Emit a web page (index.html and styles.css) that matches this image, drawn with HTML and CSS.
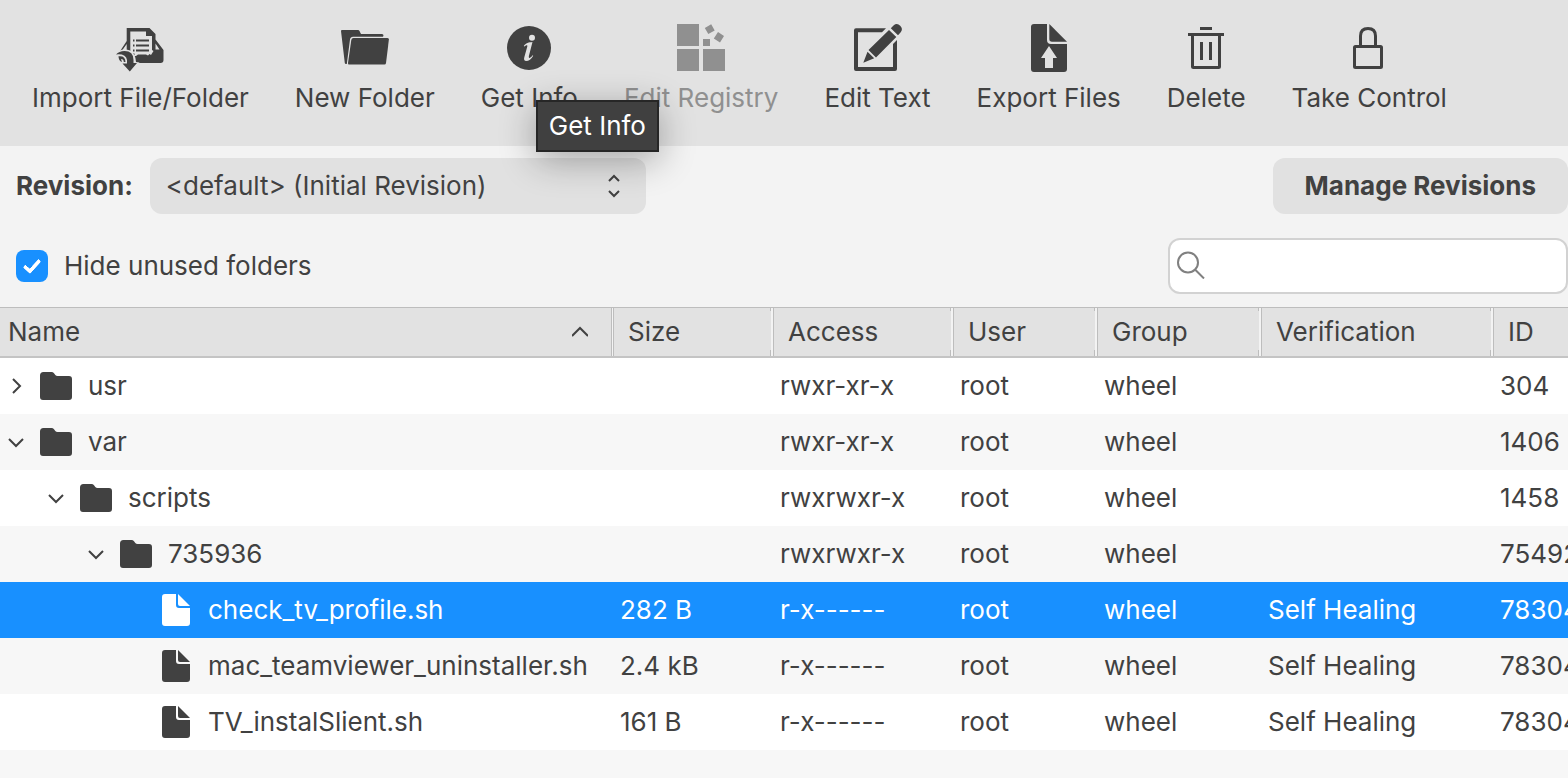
FILE: index.html
```html
<!DOCTYPE html>
<html lang="en">
<head>
<meta charset="utf-8">
<meta name="viewport" content="width=device-width, initial-scale=1">
<title>Package Files</title>
<link rel="stylesheet" href="styles.css">
</head>
<body>
<svg class="sprite" aria-hidden="true">
  <symbol id="folder" viewBox="0 0 32 32"><path d="M3.500 2H11.500Q13 2 14 3.200L15.300 4.900Q16.200 6 17.500 6H29Q32 6 32 9V27Q32 30 29 30H3Q0 30 0 27V5.500Q0 2 3.500 2Z"/></symbol>
  <symbol id="file" viewBox="0 0 32 32"><path d="M5 0H16V11Q16 14 19 14H30V29Q30 32 27 32H5Q2 32 2 29V3Q2 0 5 0Z"/><path d="M18 0L30 12H20Q18 12 18 10Z"/></symbol>
  <symbol id="down" viewBox="0 0 16 16"><path class="line" d="M1 5L8 12L15 5"/></symbol>
  <symbol id="right" viewBox="0 0 16 16"><path class="line" d="M5 1L12 8L5 15"/></symbol>
  <symbol id="up" viewBox="0 0 16 16"><path class="line" d="M0 12L8 4L16 12"/></symbol>
</svg>

<header class="toolbar">
  <button class="tool" type="button">
    <svg class="tool-icon" viewBox="0 0 48 48">
      <path d="M10.700 4H33.500L39.500 10V15.500L47.500 26V36Q47.500 39 44.500 39H20L16 31H1.500L10.700 17Z"/>
      <path class="bg" d="M14.300 7.500H30V12H36V26L37.500 27L35 31L33.500 30L32 31.500L30 30.500H22L20 32H15L14.300 27ZM10.700 20V28H5ZM39.500 19.500L43.500 25.500H39.500Z"/>
      <path class="line" d="M17 16.500h1.500M20 16.500h13M17 21.500h1.500M20 21.500h13M17 26.500h1.500M20 26.500h13M17 30.300h1.500" stroke-width="1.800"/>
      <path class="bg" d="M-1 30.500Q2 25.500 9 25.500Q19 25.500 20 38L23.500 38.500L14 49L2 40L-1 34Z"/>
      <path d="M0 30.500Q3 27 8.500 27Q17.500 27 17.500 36V39H21L13.800 47.500L6.500 39.500H11V36Q10 29.500 0 30.500Z"/>
      <path d="M2.500 32.300Q9.300 31.300 9.500 38H7.800Q7.800 35 5 35L6 38Q2.500 37 2.500 32.300Z"/>
    </svg>
    <span>Import File/Folder</span>
  </button>
  <button class="tool" type="button">
    <svg class="tool-icon" viewBox="0 0 48 48">
      <path d="M1 6H17Q18 6 18.500 7L20 10H41Q42.500 10 42.500 11.500L42 12.700H12Q9.500 12.700 9 15.500L5.800 40H5Q4 40 3.800 39L0 7Q0 6 1 6Z"/>
      <path d="M12.500 14H46.500Q48 14 47.900 15.500L45 39Q44.800 40.500 43.500 40.500H8Q6.800 40.500 7 39L10.300 16Q10.600 14 12.500 14Z"/>
    </svg>
    <span>New Folder</span>
  </button>
  <div class="tool-anchor">
    <button class="tool" type="button" aria-describedby="info-tip">
      <svg class="tool-icon" viewBox="0 0 48 48">
        <circle cx="24" cy="24" r="22"/>
        <circle class="bg" cx="27" cy="13.700" r="3"/>
        <path class="bg" d="M18.800 22C20.500 19 24 18.300 27.500 18L24 31.500C23.500 33.500 24 34.500 25 33.800C26 33.200 27 32.300 27.500 31.200L28.200 31.700C26.500 35 23.500 37 21.300 37C19.200 37 18.700 35.500 19.300 33.300L22.300 22.500C22.600 21 21.500 20.700 19.500 22.500Z"/>
      </svg>
      <span>Get Info</span>
    </button>
    <div class="tooltip" id="info-tip" role="tooltip">Get Info</div>
  </div>
  <button class="tool" type="button" disabled>
    <svg class="tool-icon" viewBox="0 0 48 48">
      <path d="M0 0H22V22H0ZM0 25H22V47H0ZM26 25H48V47H26ZM26 15H33V22H26ZM34.200 .2L37.700 6.500L31.300 10L27.800 4ZM41 8L47 12L43 18.500L36.800 14.500Z"/>
    </svg>
    <span>Edit Registry</span>
  </button>
  <button class="tool" type="button">
    <svg class="tool-icon" viewBox="0 0 48 48">
      <path d="M2 4.300H32L28 8.300H4V43H39V20L43 16V45Q43 47 41 47H2Q0 47 0 45V6.300Q0 4.300 2 4.300Z"/>
      <path d="M35 6L42.300 13L22 33.500L14.500 26ZM36.800 4.200L39.500 1.500Q43 -1.500 46.200 1.700Q49.500 5 46.500 8.500L44 11.200ZM13.500 27.700L20.200 34.300L9.300 38.700Z"/>
    </svg>
    <span>Edit Text</span>
  </button>
  <button class="tool" type="button">
    <svg class="tool-icon" viewBox="0 0 48 48">
      <path fill-rule="evenodd" d="M9 0H22V16Q22 20 26 20H42V45Q42 48 39 48H9Q6 48 6 45V3Q6 0 9 0ZM24 22L16 34H20V44H28V34H32Z"/>
      <path d="M24.300 0L42 17.700H27Q24.300 17.700 24.300 15Z"/>
    </svg>
    <span>Export Files</span>
  </button>
  <button class="tool" type="button">
    <svg class="tool-icon" viewBox="0 0 48 48">
      <path class="line" stroke-width="3" d="M18 4.500H30M6 10.500H42M10.500 10.500V42.500Q10.500 43.500 11.500 43.500H36.500Q37.500 43.500 37.500 42.500V10.500M19.500 18V36M28.500 18V36"/>
    </svg>
    <span>Delete</span>
  </button>
  <button class="tool" type="button">
    <svg class="tool-icon" viewBox="0 0 48 48">
      <rect class="line" stroke-width="3" x="9.500" y="22.500" width="27" height="21" rx="1"/>
      <path class="line" stroke-width="3" d="M15.500 22V12Q15.500 4.500 23 4.500Q30.500 4.500 30.500 12V22"/>
    </svg>
    <span>Take Control</span>
  </button>
</header>

<main class="content">
  <section class="filters">
    <div class="filter-row">
      <label class="revision-label" for="revision">Revision:</label>
      <div class="select-wrap">
        <select class="revision" id="revision"><option>&lt;default&gt; (Initial Revision)</option></select>
        <svg class="select-icon" viewBox="0 0 12 24" aria-hidden="true"><path class="line" d="M1 7L6 2L11 7M1 17L6 22L11 17"/></svg>
      </div>
      <button class="manage" type="button">Manage Revisions</button>
    </div>
    <div class="filter-row">
      <label class="check"><input class="check-box" type="checkbox" checked>Hide unused folders</label>
      <div class="search-wrap">
        <svg class="search-icon" viewBox="0 0 28 28" aria-hidden="true"><path class="line" d="M21 11.500A10 10 0 1 1 1 11.500A10 10 0 1 1 21 11.500M18 18.500L27 27.500"/></svg>
        <input class="search" type="search" aria-label="Search files">
      </div>
    </div>
  </section>

  <table class="files">
    <colgroup><col class="c-name"><col class="c-size"><col class="c-access"><col class="c-user"><col class="c-group"><col class="c-verify"><col></colgroup>
    <thead>
      <tr>
        <th scope="col" aria-sort="ascending"><div class="sort">Name<svg class="chevron"><use href="#up"/></svg></div></th>
        <th scope="col">Size</th><th scope="col">Access</th><th scope="col">User</th><th scope="col">Group</th><th scope="col">Verification</th><th scope="col">ID</th>
      </tr>
    </thead>
    <tbody>
      <tr><td><div class="node"><button class="toggle" type="button" aria-label="Expand usr"><svg class="chevron"><use href="#right"/></svg></button><svg class="kind"><use href="#folder"/></svg>usr</div></td><td></td><td>rwxr-xr-x</td><td>root</td><td>wheel</td><td></td><td>304</td></tr>
      <tr><td><div class="node"><button class="toggle" type="button" aria-label="Collapse var"><svg class="chevron"><use href="#down"/></svg></button><svg class="kind"><use href="#folder"/></svg>var</div></td><td></td><td>rwxr-xr-x</td><td>root</td><td>wheel</td><td></td><td>1406</td></tr>
      <tr><td><div class="node level-1"><button class="toggle" type="button" aria-label="Collapse scripts"><svg class="chevron"><use href="#down"/></svg></button><svg class="kind"><use href="#folder"/></svg>scripts</div></td><td></td><td>rwxrwxr-x</td><td>root</td><td>wheel</td><td></td><td>1458</td></tr>
      <tr><td><div class="node level-2"><button class="toggle" type="button" aria-label="Collapse 735936"><svg class="chevron"><use href="#down"/></svg></button><svg class="kind"><use href="#folder"/></svg>735936</div></td><td></td><td>rwxrwxr-x</td><td>root</td><td>wheel</td><td></td><td>75492</td></tr>
      <tr class="selected"><td><div class="node level-4"><svg class="kind"><use href="#file"/></svg>check_tv_profile.sh</div></td><td>282 B</td><td>r-x------</td><td>root</td><td>wheel</td><td>Self Healing</td><td>78304</td></tr>
      <tr><td><div class="node level-4"><svg class="kind"><use href="#file"/></svg>mac_teamviewer_uninstaller.sh</div></td><td>2.4 kB</td><td>r-x------</td><td>root</td><td>wheel</td><td>Self Healing</td><td>78304</td></tr>
      <tr><td><div class="node level-4"><svg class="kind"><use href="#file"/></svg>TV_instalSlient.sh</div></td><td>161 B</td><td>r-x------</td><td>root</td><td>wheel</td><td>Self Healing</td><td>78304</td></tr>
    </tbody>
  </table>
</main>
</body>
</html>
```

FILE: styles.css
```css
* { box-sizing: border-box; }

body {
  margin: 0;
  min-height: 100vh;
  background: #f7f7f7;
  color: #414141;
  font: 26px/32px Inter, "Liberation Sans", sans-serif;
}

button, input, select { font: inherit; color: inherit; }
button { border: 0; padding: 0; background: none; }
svg { display: block; flex: none; fill: currentColor; }
.sprite { position: absolute; width: 0; height: 0; }
.line { fill: none; stroke: currentColor; }
.bg { fill: #e2e2e2; }

/* Toolbar */
.toolbar {
  display: flex;
  gap: 46px;
  padding: 24px 32px 32px;
  background: #e2e2e2;
  white-space: nowrap;
}
.tool { display: flex; flex-direction: column; align-items: center; gap: 10px; }
.tool:disabled { color: #909090; }
.tool-icon { width: 48px; height: 48px; overflow: visible; }
.tool-anchor { position: relative; }
.tooltip {
  position: absolute;
  z-index: 1;
  top: 76px;
  left: 55px;
  padding: 8px 11px;
  border: 2px solid #262626;
  background: #404040;
  color: #fff;
  box-shadow: 0 8px 36px rgba(0, 0, 0, .32);
}

/* Revision and search */
.filters {
  display: flex;
  flex-direction: column;
  gap: 24px;
  padding: 12px 0 13px 16px;
  background: #f3f3f3;
}
.filter-row { display: flex; align-items: center; }
.revision-label { font-weight: 700; margin-right: 17px; }
.select-wrap { position: relative; width: 496px; }
.revision {
  appearance: none;
  display: block;
  width: 100%;
  height: 56px;
  padding: 0 48px 0 16px;
  border: 0;
  border-radius: 12px;
  background: #e1e1e1;
}
.select-icon {
  position: absolute;
  top: 16px;
  right: 26px;
  width: 12px;
  height: 24px;
  stroke-width: 2;
  pointer-events: none;
}
.manage {
  height: 56px;
  margin-left: auto;
  padding: 0 32px;
  border-radius: 12px;
  background: #e1e1e1;
  font-weight: 700;
}
.check { display: flex; align-items: center; gap: 16px; }
.check-box {
  appearance: none;
  width: 32px;
  height: 32px;
  margin: 0;
  border-radius: 8px;
  background: #1890ff;
}
.check-box:checked::before {
  content: "";
  display: block;
  box-sizing: border-box;
  width: 10px;
  height: 17px;
  margin: 6px 0 0 11px;
  border: solid #fff;
  border-width: 0 4px 4px 0;
  border-radius: 2px;
  transform: rotate(42deg);
}
.search-wrap { position: relative; width: 400px; margin-left: auto; }
.search {
  appearance: none;
  display: block;
  width: 100%;
  height: 56px;
  padding: 0 16px 0 44px;
  border: 2px solid #d2d2d2;
  border-radius: 12px;
  background: #fff;
}
.search-icon {
  position: absolute;
  top: 13px;
  left: 9px;
  width: 28px;
  height: 28px;
  color: #808080;
  stroke-width: 2;
}

/* File table */
.files { width: 100%; table-layout: fixed; border-spacing: 0; white-space: nowrap; }
.c-name { width: 612px; }
.c-size { width: 160px; }
.c-access { width: 180px; }
.c-user { width: 144px; }
.c-group { width: 164px; }
.c-verify { width: 232px; }
.files th, .files td { padding: 0 8px; overflow: hidden; text-align: left; }
.files td:last-child { padding-right: 0; }
.files th {
  height: 51px;
  padding-left: 16px;
  border-top: 1px solid #bdbdbd;
  border-bottom: 2px solid #c4c4c4;
  background:
    linear-gradient(90deg, #f3f3f3 1px, #bdbdbd 1px) left / 2px 100% no-repeat,
    linear-gradient(#bdbdbd 3px, #e2e2e2 3px 42px, #bdbdbd 42px) right 1px top / 1px 100% no-repeat,
    linear-gradient(#f3f3f3, #f3f3f3) right / 1px 100% no-repeat,
    #e2e2e2;
  font-weight: 400;
}
.files th:first-child {
  padding-left: 8px;
  background: linear-gradient(#bdbdbd, #bdbdbd) right / 1px 100% no-repeat, #e2e2e2;
}
.files th:last-child {
  background: linear-gradient(90deg, #f3f3f3 1px, #bdbdbd 1px) left / 2px 100% no-repeat, #e2e2e2;
}
.sort { display: flex; align-items: center; justify-content: space-between; padding-right: 16px; }
.files td { height: 56px; }
.files tbody tr { background: #fff; }
.files tbody tr:nth-child(even) { background: #f7f7f7; }
.files tbody tr.selected { background: #1890ff; color: #fff; }
.chevron { width: 16px; height: 16px; stroke-width: 2; overflow: visible; }
.kind { width: 32px; height: 32px; }
.node { display: flex; align-items: center; gap: 16px; }
.level-1 { padding-left: 40px; }
.level-2 { padding-left: 80px; }
.level-4 { padding-left: 152px; }
```
